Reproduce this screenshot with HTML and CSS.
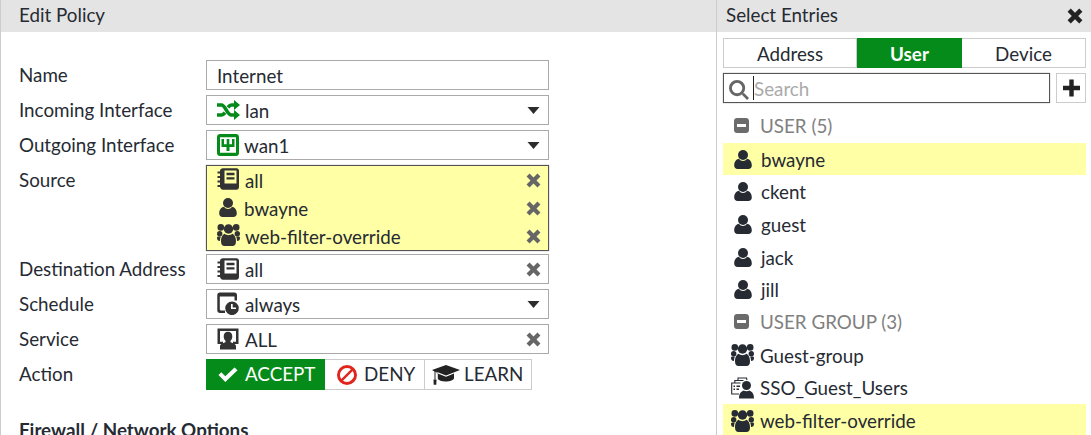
FILE: index.html
```html
<!DOCTYPE html>
<html lang="en">
<head>
<meta charset="utf-8">
<title>Edit Policy</title>
<link rel="stylesheet" href="styles.css">
</head>
<body>
<svg class="defs" width="0" height="0" aria-hidden="true">
  <symbol id="i-x" viewBox="0 0 14 14"><path d="M0.5 3.3 3.3 0.5 7 4.2 10.700 0.5 13.500 3.3 9.800 7 13.500 10.700 10.700 13.500 7 9.800 3.300 13.500 0.500 10.700 4.200 7Z"/></symbol>
  <symbol id="i-caret" viewBox="0 0 12 7"><path d="M0 0H12L6 7Z"/></symbol>
  <symbol id="i-book" viewBox="0 0 22 22"><path fill-rule="evenodd" d="M3 3C3 1.300 4.400 0.300 6 0.300H19.500C20.900 0.300 22 1.400 22 3V19C22 20.600 20.900 21.700 19.500 21.700H6C4.400 21.700 3 20.400 3 18.500ZM7.500 2.500V15.500H19.500V2.500ZM9.500 4.700H17.500V7.200H9.500ZM9.500 9.200H17.500V11.500H9.500Z"/><path d="M0.500 3.500H4V5.500H0.500ZM0.500 8H4V10H0.500ZM0.500 12.500H4V14.500H0.500ZM0.500 17H4V19H0.500Z"/></symbol>
  <symbol id="i-user" viewBox="0 0 18 19"><circle cx="9" cy="5" r="5"/><path d="M0.200 15.500C0.200 11 3 9.200 5 8.800 6 10.400 7.400 11 9 11 10.600 11 12 10.400 13 8.800 15 9.200 17.800 11 17.800 15.500 17.800 17.500 16.300 19 14.500 19H3.500C1.700 19 0.200 17.500 0.200 15.500Z"/></symbol>
  <symbol id="i-group" viewBox="0 0 23 22"><circle cx="11.500" cy="5" r="4.700"/><circle cx="3.800" cy="3.400" r="3.300"/><circle cx="19.200" cy="3.400" r="3.300"/><circle cx="2.700" cy="9.800" r="2.700"/><circle cx="20.300" cy="9.800" r="2.700"/><path d="M4 17.500C4 12.500 6 10.500 7.800 9.800 8.800 10.800 10.100 11.200 11.500 11.200 12.900 11.200 14.200 10.800 15.200 9.800 17 10.500 19 12.500 19 17.500 19 20.600 17.500 22 15.500 22H7.500C5.500 22 4 20.600 4 17.500Z"/><path d="M0 14C0 12.500 1 12.300 3.800 12.600 3.200 14 3 15.500 3 17 1 17 0 15.800 0 14ZM23 14C23 12.500 22 12.300 19.200 12.600 19.800 14 20 15.500 20 17 22 17 23 15.800 23 14Z"/></symbol>
  <symbol id="i-shuffle" viewBox="0 0 23 20"><path fill="none" stroke="currentColor" stroke-width="3.600" d="M0 5H4.500C8.500 5 10 15 14.500 15H19M0 15H4.500C6 15 7 14 8 12.700M11 7.300C12 6 13 5 14.500 5H19"/><path d="M17 0 23 5 17 10ZM17 10 23 15 17 20Z"/></symbol>
  <symbol id="i-wan" viewBox="0 0 22 22"><path fill-rule="evenodd" d="M3 0H19C20.700 0 22 1.300 22 3V19C22 20.700 20.700 22 19 22H3C1.300 22 0 20.700 0 19V3C0 1.300 1.300 0 3 0ZM3 3.200V18.800H19V3.200Z"/><path d="M4.500 5H7V10.300H9.700V5H12.300V10.300H15V5H17.500V13H12.500V17H9.500V13H4.500Z"/></symbol>
  <symbol id="i-clock" viewBox="0 0 22 23"><path fill-rule="evenodd" d="M3 0.500H17.500C19 0.500 20 1.500 20 3V8.500H17.500V4.500H2.800V17C2.800 18.100 3.500 18.500 4.500 18.500H8V21H3C1.300 21 0.300 20 0.300 18.500V3C0.300 1.500 1.300 0.500 3 0.500Z"/><path fill-rule="evenodd" d="M15 9.500A6.800 6.800 0 1 1 15 23.100 6.800 6.800 0 0 1 15 9.500ZM14 12V17.100H19V15.400H15.700V12Z"/></symbol>
  <symbol id="i-service" viewBox="0 0 22 22"><path fill-rule="evenodd" d="M0.500 0.500H21.500V16H16V13.800H19V3H3V13.800H6V16H0.500Z"/><path d="M11 3.800C13.800 3.800 15.300 5.800 15.300 8.300 15.300 10.300 14.500 11.800 13.500 12.800V14.300C16 15.200 19 16 19 18.200V21.500H3V18.200C3 16 6 15.200 8.500 14.300V12.800C7.500 11.800 6.700 10.300 6.700 8.300 6.700 5.800 8.200 3.800 11 3.800Z"/></symbol>
  <symbol id="i-check" viewBox="0 0 20 15"><path d="M0.500 8 3.300 5.200 7.300 9.200 16.500 0.500 19.500 3.300 7.300 15Z"/></symbol>
  <symbol id="i-deny" viewBox="0 0 20 20"><path fill-rule="evenodd" d="M10 0A10 10 0 1 1 10 20 10 10 0 0 1 10 0ZM10 3A7 7 0 0 0 4.300 14L14 4.300A7 7 0 0 0 10 3ZM15.700 6 6 15.700A7 7 0 0 0 15.700 6Z"/></symbol>
  <symbol id="i-cap" viewBox="0 0 28 20"><path d="M14 0 28 5 14 10.500 4.500 6.800V8L14 11.700 22 8.500V13C22 15 18 16.500 13.500 16.500 9.500 16.500 6.500 15.300 5.800 13.800V7.800L3.500 6.800V14.500H2.500V6.400L0 5Z"/><path d="M1.500 14.500H4.500L4.300 19.800H1.700Z"/></symbol>
  <symbol id="i-search" viewBox="0 0 21 21"><path fill-rule="evenodd" d="M8.500 0A8.500 8.500 0 1 1 8.500 17 8.500 8.500 0 0 1 8.500 0ZM8.500 3A5.500 5.500 0 1 0 8.500 14 5.500 5.500 0 0 0 8.500 3Z"/><path d="M13.500 15.500 15.500 13.500 21 19 19 21Z"/></symbol>
  <symbol id="i-plus" viewBox="0 0 18 18"><path d="M6.800 0.500H11.200V6.800H17.500V11.200H11.200V17.500H6.800V11.200H0.500V6.800H6.800Z"/></symbol>
  <symbol id="i-minus" viewBox="0 0 15 15"><path fill-rule="evenodd" d="M3 0H12C13.700 0 15 1.300 15 3V12C15 13.700 13.700 15 12 15H3C1.300 15 0 13.700 0 12V3C0 1.300 1.300 0 3 0ZM3 6V9H12V6Z"/></symbol>
  <symbol id="i-sso" viewBox="0 0 23 22"><path fill="none" stroke="currentColor" stroke-width="1.100" d="M7 3.500V1H15.500L16 3M3.800 6V3.500H12.500M8 17H0.700V6H9.500"/><path d="M2.500 8.500H4V10H2.500ZM2.500 11.500H4V13H2.500ZM5.500 8.500H9V10H5.500ZM5.500 11.500H8V13H5.500Z"/><circle cx="15.500" cy="8.500" r="4.500"/><path d="M8 21.500C8 16 10.500 14.500 12.500 13.500 14 14.500 17 14.500 18.500 13.500 20.500 14.500 23 16 23 21.500Z"/></symbol>
</svg>

<div class="page">
  <main class="editor">
    <h1 class="bar">Edit Policy</h1>
    <div class="form">
      <div class="label">Name</div>
      <div class="field plain">Internet</div>

      <div class="label">Incoming Interface</div>
      <div class="field">
        <svg class="ico green shuffle"><use href="#i-shuffle"/></svg><span class="val">lan</span>
        <svg class="caret"><use href="#i-caret"/></svg>
      </div>

      <div class="label">Outgoing Interface</div>
      <div class="field">
        <svg class="ico green wan"><use href="#i-wan"/></svg><span class="val">wan1</span>
        <svg class="caret"><use href="#i-caret"/></svg>
      </div>

      <div class="label">Source</div>
      <div class="multi">
        <div class="chip"><svg class="ico"><use href="#i-book"/></svg><span class="val">all</span><svg class="rm"><use href="#i-x"/></svg></div>
        <div class="chip"><svg class="ico user"><use href="#i-user"/></svg><span class="val">bwayne</span><svg class="rm"><use href="#i-x"/></svg></div>
        <div class="chip"><svg class="ico group"><use href="#i-group"/></svg><span class="val">web-filter-override</span><svg class="rm"><use href="#i-x"/></svg></div>
      </div>

      <div class="label">Destination Address</div>
      <div class="field">
        <svg class="ico"><use href="#i-book"/></svg><span class="val">all</span>
        <svg class="rm"><use href="#i-x"/></svg>
      </div>

      <div class="label">Schedule</div>
      <div class="field">
        <svg class="ico clock"><use href="#i-clock"/></svg><span class="val">always</span>
        <svg class="caret"><use href="#i-caret"/></svg>
      </div>

      <div class="label">Service</div>
      <div class="field">
        <svg class="ico"><use href="#i-service"/></svg><span class="val">ALL</span>
        <svg class="rm"><use href="#i-x"/></svg>
      </div>

      <div class="label">Action</div>
      <div class="actions">
        <div class="act act-on"><svg class="a-check"><use href="#i-check"/></svg>ACCEPT</div>
        <div class="act act-deny"><svg class="a-deny"><use href="#i-deny"/></svg>DENY</div>
        <div class="act act-learn"><svg class="a-cap"><use href="#i-cap"/></svg>LEARN</div>
      </div>
    </div>
    <h2 class="section">Firewall / Network Options</h2>
  </main>

  <aside class="picker">
    <div class="bar bar-side"><span>Select Entries</span><svg class="close"><use href="#i-x"/></svg></div>
    <div class="tabs">
      <div class="tab t-addr">Address</div>
      <div class="tab t-user">User</div>
      <div class="tab t-dev">Device</div>
    </div>
    <div class="searchrow">
      <div class="search">
        <svg class="s-ico"><use href="#i-search"/></svg>
        <span class="cursor"></span><span class="ph">Search</span>
      </div>
      <div class="add"><svg class="plus"><use href="#i-plus"/></svg></div>
    </div>
    <div class="list">
      <div class="row head"><svg class="minus"><use href="#i-minus"/></svg>USER (5)</div>
      <div class="row sel"><svg class="l-user"><use href="#i-user"/></svg>bwayne</div>
      <div class="row"><svg class="l-user"><use href="#i-user"/></svg>ckent</div>
      <div class="row"><svg class="l-user"><use href="#i-user"/></svg>guest</div>
      <div class="row"><svg class="l-user"><use href="#i-user"/></svg>jack</div>
      <div class="row"><svg class="l-user"><use href="#i-user"/></svg>jill</div>
      <div class="row head"><svg class="minus"><use href="#i-minus"/></svg>USER GROUP (3)</div>
      <div class="row"><svg class="l-group"><use href="#i-group"/></svg>Guest-group</div>
      <div class="row"><svg class="l-group"><use href="#i-sso"/></svg>SSO_Guest_Users</div>
      <div class="row sel"><svg class="l-group"><use href="#i-group"/></svg>web-filter-override</div>
    </div>
  </aside>
</div>
</body>
</html>
```

FILE: styles.css
```css
* { box-sizing: border-box; }
html, body { margin: 0; height: 435px; overflow: hidden; background: #fff; }
body { font-family: Lato, "Open Sans", sans-serif; font-size: 18.8px; color: #262b33; }
.defs { display: block; height: 0; }
svg { fill: currentColor; display: block; flex: none; }

.page { display: flex; height: 435px; overflow: hidden; }
.editor { width: 716px; flex: none; border-left: 1px solid #ccc; }
.picker { flex: 1; border-left: 1px solid #ccc; }

.bar { margin: 0; height: 32px; background: #e4e4e4; font-size: 18.8px; font-weight: 400; line-height: 30px; padding-left: 18px; }
.bar-side { display: flex; justify-content: space-between; align-items: center; padding: 0 7px 2px 9px; }
.close { width: 18px; height: 16px; color: #222; margin-top: 2px; }

.form { display: grid; grid-template-columns: 187px 343px; grid-template-rows: 30px 30px 30px 84px 30px 30px 30px 31px; row-gap: 5px; padding: 28px 0 0 18px; }
.label { line-height: 30px; }
.field { display: flex; align-items: center; border: 1px solid #aaa; padding: 0 7px 0 10px; background: #fff; }
.ico { width: 22px; height: 22px; color: #333; margin-right: 6px; }
.ico.user { width: 18px; height: 19px; margin: 0 7px 0 2px; }
.ico.group { width: 23px; margin-right: 5px; }
.ico.clock { height: 23px; margin-top: -1px; }
.ico.green { color: #058b1a; }
.ico.wan { margin-right: 5px; margin-bottom: 1px; }
.ico.shuffle { width: 23px; height: 20px; margin-right: 5px; }
.val { flex: 1; }
.caret { width: 13px; height: 7px; color: #2c2c2c; margin-right: 1px; }
.rm { width: 15px; height: 15px; color: #666; }

.multi { height: 86px; border: 1px solid #555; background: #ffffa6; padding: 0 7px 0 10px; box-shadow: 0 0 1px #888; }
.chip { display: flex; align-items: center; height: 28px; }
.chip .ico { margin-bottom: 2px; }

.actions { display: flex; height: 31px; }
.act { display: flex; align-items: center; height: 31px; border: 1px solid #ccc; border-left: 0; line-height: 1; }
.act-on { width: 119px; background: #058b1a; border: 0; color: #fff; padding-left: 12px; gap: 7px; }
.act-deny { width: 100px; padding-left: 12px; gap: 7px; }
.act-learn { width: 107px; padding-left: 7px; gap: 4px; }
.a-check { width: 20px; height: 15px; }
.a-deny { width: 20px; height: 20px; color: #e0261c; }
.a-cap { width: 28px; height: 20px; color: #222; }

.section { margin: 28px 0 0 18px; font-size: 18.8px; font-weight: 700; line-height: 24px; }

.tabs { display: flex; height: 30px; margin: 6px 5px 0 6px; border: 1px solid #ccc; }
.tab { text-align: center; line-height: 30px; border-right: 1px solid #ccc; }
.t-addr { width: 133px; }
.t-user { width: 105px; margin: -1px 0; height: 30px; line-height: 32px; background: #058b1a; color: #fff; font-weight: 700; border: 0; }
.t-dev { flex: 1; border: 0; }

.searchrow { display: flex; gap: 6px; margin: 5px 5px 0 6px; height: 30px; }
.search { flex: 1; display: flex; align-items: center; border: 1px solid #555; padding-left: 5px; box-shadow: 0 0 1px #888; }
.s-ico { width: 20px; height: 20px; color: #666; margin-top: 3px; }
.cursor { width: 1px; height: 24px; background: #222; margin-left: 4px; flex: none; }
.ph { color: #aaa; }
.add { width: 30px; display: flex; align-items: center; justify-content: center; border: 1px solid #ccc; }
.plus { width: 19px; height: 18px; color: #222; }

.list { margin: 7px 5px 0 6px; }
.row { display: flex; align-items: center; height: 32.7px; padding-left: 11px; }
.row.sel { background: #ffffa6; }
.row.head { color: #808080; padding-bottom: 1px; }
.minus { width: 15px; height: 15px; color: #6b6b6b; margin-right: 11px; }
.l-user { width: 18px; height: 19px; margin-right: 9px; }
.l-group { width: 23px; height: 22px; margin: 0 6px 0 -3px; }
```
